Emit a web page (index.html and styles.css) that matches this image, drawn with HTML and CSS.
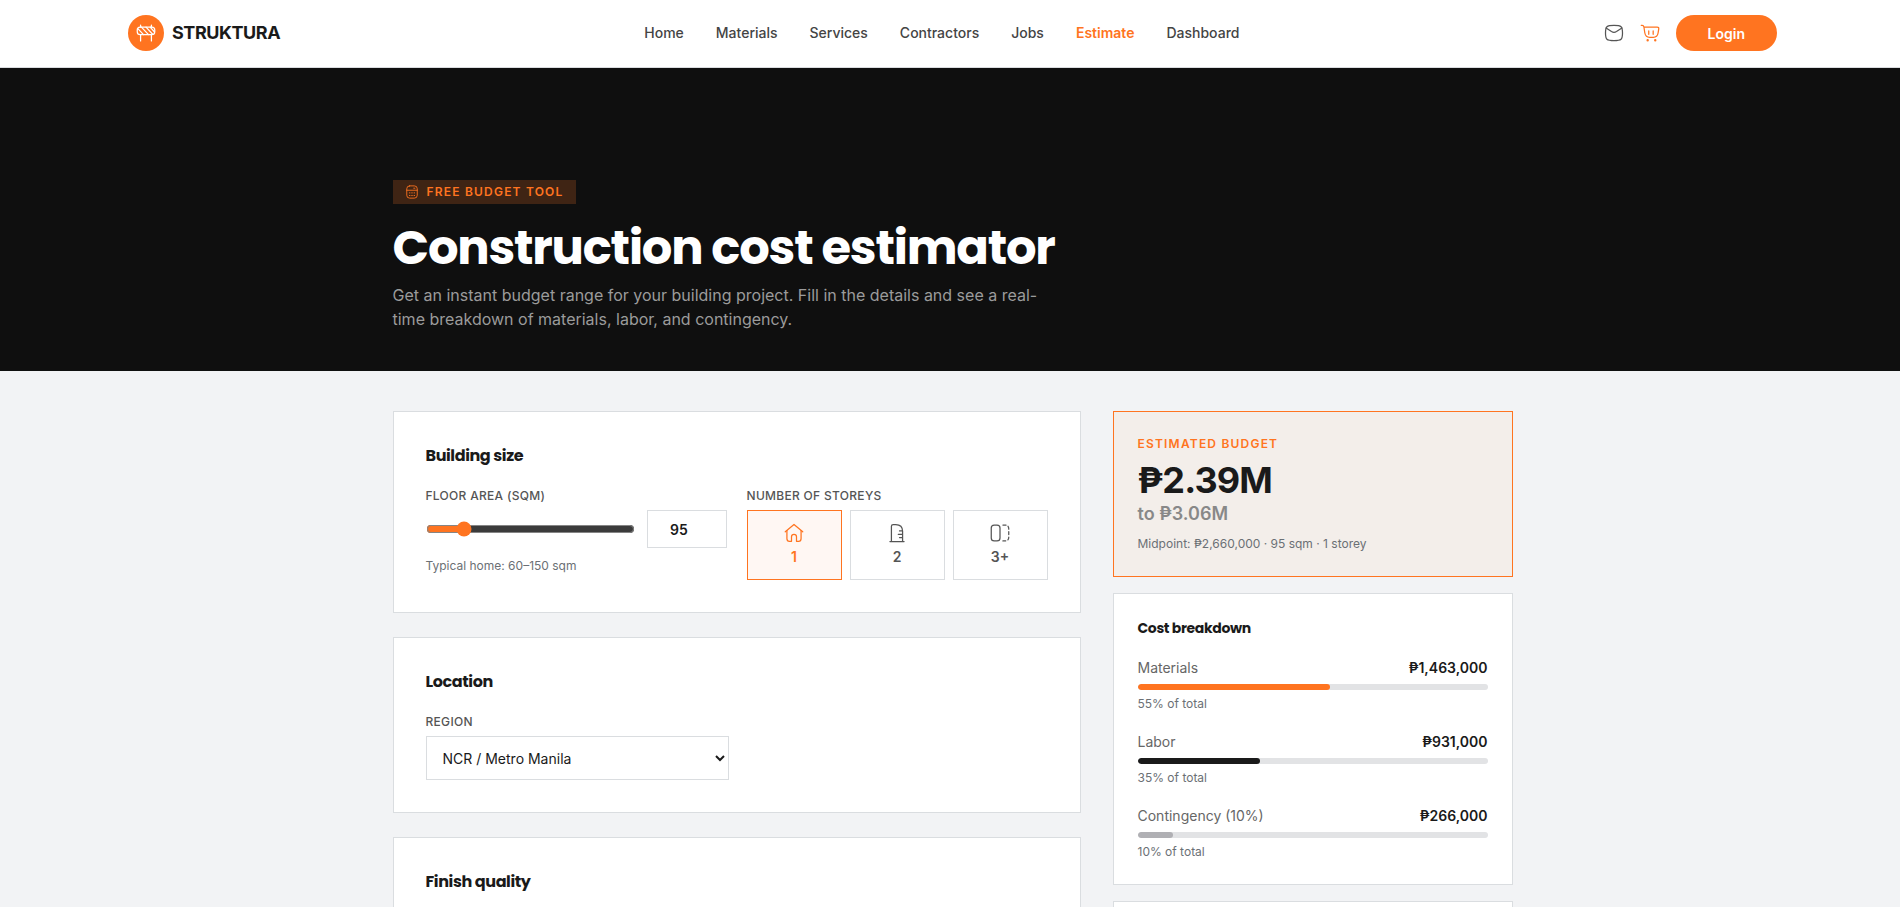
FILE: index.html
```html
<!DOCTYPE html>
<html lang="en">
<head>
  <meta charset="UTF-8">
  <meta name="viewport" content="width=device-width, initial-scale=1.0">
  <title>Construction cost estimator</title>
  <link rel="stylesheet" href="styles.css">
</head>
<body>
  <header class="navbar">
    <a href="#" class="logo">
      <span class="logo-mark">
        <svg class="icon" viewBox="0 0 24 24">
          <rect x="1.500" y="5" width="21" height="9" rx="3.500"/>
          <path d="M5.500 5V2.500M18.500 5V2.500M5.500 14v7.500M18.500 14v7.500M2.500 7l6.500 7M6.500 5l8.500 9M12 5l8 8.500M17 5l5 5.500"/>
        </svg>
      </span>
      STRUKTURA
    </a>
    <nav>
      <ul class="nav-links">
        <li><a href="#">Home</a></li>
        <li><a href="#">Materials</a></li>
        <li><a href="#">Services</a></li>
        <li><a href="#">Contractors</a></li>
        <li><a href="#">Jobs</a></li>
        <li><a href="#" class="active">Estimate</a></li>
        <li><a href="#">Dashboard</a></li>
      </ul>
    </nav>
    <div class="nav-actions">
      <a href="#" class="icon-link" aria-label="Messages">
        <svg class="icon" viewBox="0 0 24 24">
          <path d="M1.800 12c0-8 1.200-9.200 10.200-9.200S22.200 4 22.200 12 21 21.200 12 21.200 1.800 20 1.800 12z"/>
          <path d="M2.500 6l6.500 4.200c2.300 1.400 3.700 1.400 6 0L21.500 6"/>
        </svg>
      </a>
      <a href="#" class="icon-link cart" aria-label="Cart">
        <svg class="icon" viewBox="0 0 24 24">
          <path d="M1.500 2.800h1.200c1 0 1.700.6 2 2h15.800c1.600 0 2.200.8 2 2.200l-.8 5c-.6 3.700-2.200 5.200-5.700 5.200h-4.500c-3.500 0-5-1.500-5.700-5.200L4.700 4.800"/>
          <path d="M10.500 9.500v4M15.800 9.500v4"/>
          <circle cx="9.200" cy="20.700" r=".7"/>
          <circle cx="18.300" cy="20.700" r=".7"/>
        </svg>
      </a>
      <button type="button" class="login-btn">Login</button>
    </div>
  </header>

  <section class="hero">
    <div class="container">
      <div class="tag">
        <svg class="icon" viewBox="0 0 24 24">
          <rect x="3" y="1.500" width="18" height="21" rx="5"/>
          <path d="M3 9h18M15 5.500h2M7.500 13.500h1M11.500 13.500h1M15.500 13.500h1M7.500 18h1M11.500 18h1M15.500 18h1"/>
        </svg>
        FREE BUDGET TOOL
      </div>
      <h1>Construction cost estimator</h1>
      <p>Get an instant budget range for your building project. Fill in the details and see a real-time breakdown of materials, labor, and contingency.</p>
    </div>
  </section>

  <main class="container layout">
    <form class="form">
      <section class="card">
        <h2>Building size</h2>
        <div class="size-grid">
          <div>
            <label class="label" for="area">FLOOR AREA (SQM)</label>
            <div class="area-row">
              <input type="range" id="area" class="range" min="20" max="500" value="95">
              <input type="number" id="areaNumber" class="number" aria-label="Floor area" value="95">
            </div>
            <p class="hint">Typical home: 60–150 sqm</p>
          </div>
          <div>
            <span class="label" id="storeys">NUMBER OF STOREYS</span>
            <div class="storeys" role="group" aria-labelledby="storeys">
              <button type="button" class="storey selected">
                <svg class="icon" viewBox="0 0 24 24">
                  <path d="M1.500 10.500L12 1.800l10.500 8.700"/>
                  <path d="M3.500 9v9.500c0 2.500.8 3.500 3 3.500H9v-5.500c0-2 .8-3 3-3s3 1 3 3V22h2.500c2.200 0 3-1 3-3.500V9"/>
                </svg>
                1
              </button>
              <button type="button" class="storey">
                <svg class="icon" viewBox="0 0 24 24">
                  <path d="M3.500 22.200h17M5.300 22V4c0-1.700.5-2.200 2.200-2.200h3c5 0 8.200 3.200 8.200 8.200v12"/>
                  <path d="M18.500 9.500H15M18.500 13.500h-5M18.500 17.500H15"/>
                </svg>
                2
              </button>
              <button type="button" class="storey">
                <svg class="icon" viewBox="0 0 24 24">
                  <rect x="1.500" y="2.500" width="10.500" height="19" rx="3.500"/>
                  <path stroke-dasharray="3.500 3" d="M15.500 2.500H18c3 0 4.500 1.500 4.500 4.500v10c0 3-1.500 4.500-4.500 4.500h-2.500"/>
                </svg>
                3+
              </button>
            </div>
          </div>
        </div>
      </section>

      <section class="card">
        <h2>Location</h2>
        <div class="location-grid">
          <div>
            <label class="label" for="region">REGION</label>
            <select id="region" class="select">
              <option>NCR / Metro Manila</option>
            </select>
          </div>
        </div>
      </section>

      <section class="card">
        <h2>Finish quality</h2>
      </section>
    </form>

    <aside class="summary">
      <section class="panel budget">
        <div class="budget-label">ESTIMATED BUDGET</div>
        <div class="budget-low">₱2.39M</div>
        <div class="budget-high">to ₱3.06M</div>
        <div class="budget-mid">Midpoint: ₱2,660,000 · 95 sqm · 1 storey</div>
      </section>

      <section class="panel">
        <h3>Cost breakdown</h3>
        <div class="costs">
          <div>
            <div class="cost-head"><span>Materials</span><strong>₱1,463,000</strong></div>
            <div class="bar"><div class="fill materials" style="width: 55%"></div></div>
            <div class="share">55% of total</div>
          </div>
          <div>
            <div class="cost-head"><span>Labor</span><strong>₱931,000</strong></div>
            <div class="bar"><div class="fill labor" style="width: 35%"></div></div>
            <div class="share">35% of total</div>
          </div>
          <div>
            <div class="cost-head"><span>Contingency (10%)</span><strong>₱266,000</strong></div>
            <div class="bar"><div class="fill contingency" style="width: 10%"></div></div>
            <div class="share">10% of total</div>
          </div>
        </div>
      </section>

      <section class="panel"></section>
    </aside>
  </main>
</body>
</html>
```
FILE: styles.css
```css
* {
  margin: 0;
  padding: 0;
  box-sizing: border-box;
}

html {
  overflow-x: hidden;
}

body {
  width: calc(100% + 5px);
  font-family: Inter, "Liberation Sans", sans-serif;
  font-size: 14px;
  line-height: 20px;
  color: #1a1a1a;
  background: #f2f3f5;
}

a {
  color: inherit;
  text-decoration: none;
}

button,
input,
select {
  font-family: inherit;
}

h1,
h2,
h3 {
  font-family: Poppins, Inter, sans-serif;
  font-weight: 700;
  letter-spacing: -0.025em;
}

.icon {
  display: block;
  width: 20px;
  height: 20px;
  fill: none;
  stroke: currentColor;
  stroke-width: 1.5;
  stroke-linecap: round;
  stroke-linejoin: round;
}

.container {
  max-width: 1120px;
  margin: 0 auto;
}

/* navbar */
.navbar {
  display: flex;
  justify-content: space-between;
  align-items: center;
  padding: 15px 128px 16px;
  background: #fff;
  border-bottom: 1px solid #dadcdf;
}

.logo {
  display: flex;
  align-items: center;
  gap: 8px;
  font-size: 18px;
  font-weight: 700;
  letter-spacing: -0.025em;
}

.logo-mark {
  display: flex;
  align-items: center;
  justify-content: center;
  width: 36px;
  height: 36px;
  border-radius: 50%;
  color: #fff;
  background: #ff7420;
}

.nav-links {
  display: flex;
  gap: 32px;
  list-style: none;
  font-weight: 500;
  color: #444;
}

.nav-links .active {
  color: #ff7420;
  font-weight: 600;
}

.nav-actions {
  display: flex;
  align-items: center;
  gap: 16px;
}

.icon-link {
  color: #555;
}

.icon-link.cart {
  color: #ff7420;
}

.login-btn {
  height: 36px;
  padding: 0 32px;
  border: none;
  border-radius: 18px;
  font-size: 14px;
  font-weight: 600;
  color: #fff;
  background: #ff7420;
  cursor: pointer;
}

/* hero */
.hero {
  padding: 112px 0 40px;
  background: #0f0f0f;
}

.tag {
  display: flex;
  align-items: center;
  gap: 8px;
  width: fit-content;
  height: 24px;
  padding: 0 12px;
  font-size: 12px;
  font-weight: 600;
  letter-spacing: 0.1em;
  color: #ff7420;
  background: #3f2414;
}

.tag .icon {
  width: 14px;
  height: 14px;
}

.hero h1 {
  margin: 16px 0 8px;
  font-size: 48px;
  line-height: 55px;
  color: #fff;
}

.hero p {
  max-width: 660px;
  font-size: 16px;
  line-height: 24px;
  color: #9b9b9b;
}

/* layout */
.layout {
  display: grid;
  grid-template-columns: 1fr 400px;
  gap: 32px;
  padding: 40px 0;
}

.form {
  display: flex;
  flex-direction: column;
  gap: 24px;
}

.card {
  padding: 32px;
  background: #fff;
  border: 1px solid #dadde0;
}

.card h2 {
  margin-bottom: 20px;
  font-size: 16px;
  line-height: 24px;
}

.label {
  display: block;
  margin-bottom: 6px;
  font-size: 12px;
  line-height: 16px;
  font-weight: 500;
  letter-spacing: 0.025em;
  color: #555;
}

.size-grid {
  display: grid;
  grid-template-columns: 1fr 1fr;
  gap: 20px;
}

.location-grid {
  display: grid;
  grid-template-columns: 1fr 1fr;
  gap: 16px;
}

.area-row {
  display: flex;
  align-items: center;
  gap: 12px;
}

.range {
  flex: 1;
  min-width: 0;
  accent-color: #ff7420;
}

.number {
  width: 80px;
  height: 38px;
  padding: 0 12px;
  border: 1px solid #dadde0;
  font-size: 14px;
  font-weight: 600;
  text-align: center;
  color: #1a1a1a;
  background: #fff;
}

.hint {
  margin-top: 10px;
  font-size: 12px;
  line-height: 16px;
  color: #6b7075;
}

.storeys {
  display: grid;
  grid-template-columns: repeat(3, 1fr);
  gap: 8px;
}

.storey {
  display: flex;
  flex-direction: column;
  align-items: center;
  gap: 4px;
  padding: 12px;
  border: 1px solid #dadde0;
  font-size: 14px;
  line-height: 20px;
  font-weight: 600;
  color: #555;
  background: #fff;
  cursor: pointer;
}

.storey.selected {
  color: #ff7420;
  border-color: #ff7420;
  background: #fff7f3;
}

.select {
  width: 100%;
  height: 44px;
  padding: 0 12px;
  border: 1px solid #dadde0;
  font-size: 14px;
  color: #1a1a1a;
  background: #fff;
}

/* summary column */
.summary {
  display: flex;
  flex-direction: column;
  gap: 16px;
}

.panel {
  padding: 24px;
  background: #fff;
  border: 1px solid #dadde0;
}

.panel h3 {
  margin-bottom: 20px;
  font-size: 14px;
  line-height: 20px;
}

.budget {
  background: #f3eeea;
  border-color: #ff7420;
}

.budget-label {
  font-size: 12px;
  line-height: 16px;
  font-weight: 600;
  letter-spacing: 0.1em;
  color: #ff7420;
}

.budget-low {
  margin-top: 8px;
  font-size: 36px;
  line-height: 40px;
  font-weight: 700;
  letter-spacing: -0.025em;
}

.budget-high {
  font-size: 18px;
  line-height: 28px;
  font-weight: 600;
  color: #888;
}

.budget-mid {
  margin-top: 8px;
  font-size: 12px;
  line-height: 16px;
  color: #6b7075;
}

.costs {
  display: flex;
  flex-direction: column;
  gap: 20px;
}

.cost-head {
  display: flex;
  justify-content: space-between;
  color: #666;
}

.cost-head strong {
  font-weight: 600;
  color: #1a1a1a;
}

.bar {
  height: 6px;
  margin: 6px 0;
  border-radius: 3px;
  background: #e2e3e5;
  overflow: hidden;
}

.fill {
  height: 100%;
  border-radius: 3px;
}

.fill.materials {
  background: #ff7420;
}

.fill.labor {
  background: #1a1a1a;
}

.fill.contingency {
  background: #b0b0b4;
}

.share {
  font-size: 12px;
  line-height: 16px;
  color: #6b7075;
}
```
